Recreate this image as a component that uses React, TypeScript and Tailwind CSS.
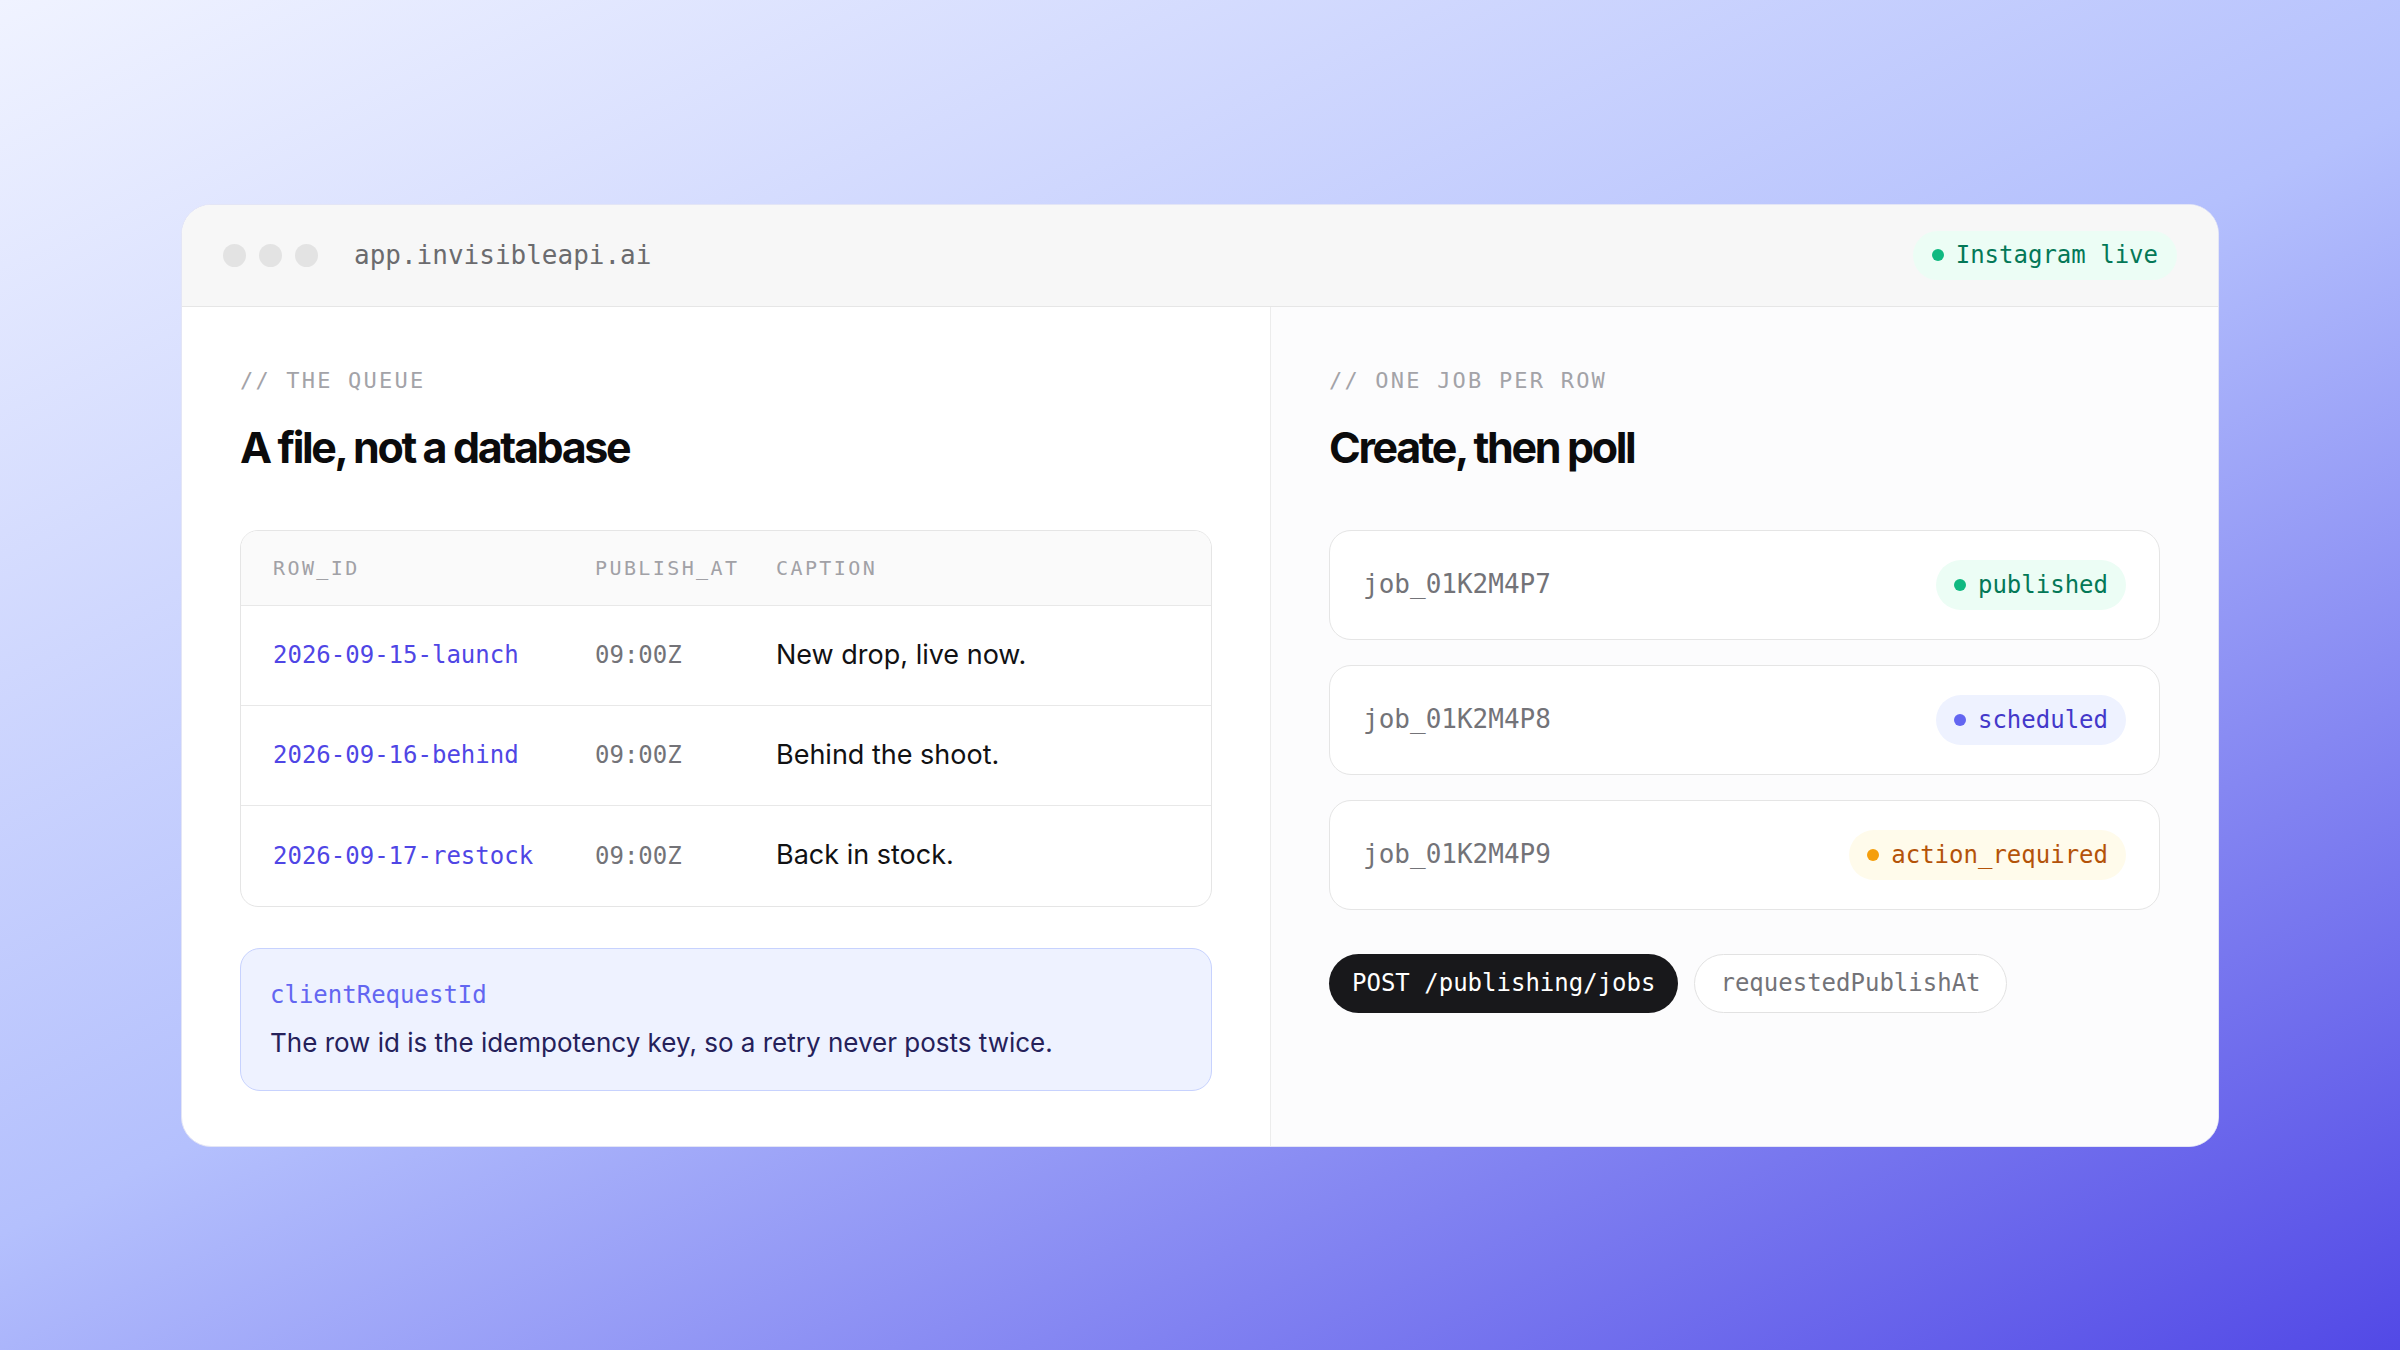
const mono = { fontFamily: '"DejaVu Sans Mono", "Liberation Mono", monospace' };

const rows = [
  { id: '2026-09-15-launch', at: '09:00Z', caption: 'New drop, live now.' },
  { id: '2026-09-16-behind', at: '09:00Z', caption: 'Behind the shoot.' },
  { id: '2026-09-17-restock', at: '09:00Z', caption: 'Back in stock.' },
];

const jobs = [
  { id: 'job_01K2M4P7', status: 'published', pill: 'bg-[#ecfdf5] text-[#047857]', dot: 'bg-[#10b981]' },
  { id: 'job_01K2M4P8', status: 'scheduled', pill: 'bg-[#eef2ff] text-[#4338ca]', dot: 'bg-[#6366f1]' },
  { id: 'job_01K2M4P9', status: 'action_required', pill: 'bg-[#fffbeb] text-[#b45309]', dot: 'bg-[#f59e0b]' },
];

function Eyebrow({ children }: { children: string }) {
  return (
    <div className="text-[22px] leading-[30px] tracking-[0.1em] text-[#a3a3a8] uppercase" style={mono}>
      {children}
    </div>
  );
}

function Heading({ children }: { children: string }) {
  return (
    <h2 className="mt-[25px] text-[43px] leading-[52px] font-bold tracking-[-0.055em] text-[#0b0b0c]">
      {children}
    </h2>
  );
}

export default function App() {
  return (
    <div
      className="min-h-screen w-full flex items-center justify-center bg-[linear-gradient(155deg,#f0f3ff_0%,#b4c0fd_50%,#5249e6_100%)]"
      style={{ fontFamily: 'Inter, "Noto Sans", sans-serif' }}
    >
      <div className="w-[2038px] rounded-[30px] bg-white border border-[#e3e5f6] overflow-hidden">
        {/* window chrome */}
        <div className="h-[102px] bg-[#f7f7f7] border-b border-[#e6e6e6] px-[41px] flex items-center justify-between">
          <div className="flex items-center">
            <div className="flex items-center gap-[13px]">
              <span className="w-[23px] h-[23px] rounded-full bg-[#e3e3e3]" />
              <span className="w-[23px] h-[23px] rounded-full bg-[#e3e3e3]" />
              <span className="w-[23px] h-[23px] rounded-full bg-[#e3e3e3]" />
            </div>
            <span className="ml-[36px] text-[26px] text-[#6b6b6e]" style={mono}>app.invisibleapi.ai</span>
          </div>
          <div className="h-[49px] px-[19px] rounded-full bg-[#ecfdf5] flex items-center gap-[12px]">
            <span className="w-3 h-3 rounded-full bg-[#10b981]" />
            <span className="text-[24px] text-[#047857]" style={mono}>Instagram live</span>
          </div>
        </div>

        <div className="grid grid-cols-[1.15fr_1fr]">
          {/* left: the queue */}
          <div className="border-r border-[#ececec] px-[58px] pt-[59px] pb-[55px]">
            <Eyebrow>// The queue</Eyebrow>
            <Heading>A file, not a database</Heading>

            <div className="mt-[57px] rounded-[18px] border border-[#e5e5e5] overflow-hidden">
              <div
                className="h-[75px] bg-[#fafafa] border-b border-[#e8e8e8] px-8 grid grid-cols-[322px_181px_1fr] items-center text-[20px] tracking-[0.12em] text-[#a1a1a6]"
                style={mono}
              >
                <span>ROW_ID</span>
                <span>PUBLISH_AT</span>
                <span>CAPTION</span>
              </div>
              {rows.map((r, i) => (
                <div
                  key={r.id}
                  className={`h-[100px] px-8 grid grid-cols-[322px_181px_1fr] items-center ${i < rows.length - 1 ? 'border-b border-[#e8e8e8]' : ''}`}
                >
                  <span className="text-[24px] text-[#4f46e5]" style={mono}>{r.id}</span>
                  <span className="text-[24px] text-[#737378]" style={mono}>{r.at}</span>
                  <span className="text-[27px] text-[#111113]">{r.caption}</span>
                </div>
              ))}
            </div>

            <div className="mt-[41px] rounded-[20px] border border-[#c7d2fe] bg-[#eef2ff] px-[29px] py-[30px]">
              <div className="text-[24px] leading-[32px] text-[#6366f1]" style={mono}>clientRequestId</div>
              <p className="mt-[15px] text-[26px] leading-[34px] text-[#25215a]">
                The row id is the idempotency key, so a retry never posts twice.
              </p>
            </div>
          </div>

          {/* right: jobs */}
          <div className="bg-[#fcfcfd] px-[58px] pt-[59px] pb-[55px]">
            <Eyebrow>// One job per row</Eyebrow>
            <Heading>Create, then poll</Heading>

            <div className="mt-[57px] flex flex-col gap-[25px]">
              {jobs.map((j) => (
                <div
                  key={j.id}
                  className="h-[110px] rounded-[22px] border border-[#e5e5e5] bg-white px-[33px] flex items-center justify-between"
                >
                  <span className="text-[26px] text-[#737378]" style={mono}>{j.id}</span>
                  <span className={`h-[50px] px-[18px] rounded-full flex items-center gap-[12px] ${j.pill}`}>
                    <span className={`w-3 h-3 rounded-full ${j.dot}`} />
                    <span className="text-[24px]" style={mono}>{j.status}</span>
                  </span>
                </div>
              ))}
            </div>

            <div className="mt-[44px] flex items-center gap-4">
              <span className="h-[59px] px-[23px] rounded-full bg-[#18181b] text-white text-[24px] flex items-center" style={mono}>
                POST /publishing/jobs
              </span>
              <span
                className="h-[59px] px-[25px] rounded-full border border-[#e2e2e2] bg-white text-[#737378] text-[24px] flex items-center"
                style={mono}
              >
                requestedPublishAt
              </span>
            </div>
          </div>
        </div>
      </div>
    </div>
  );
}
